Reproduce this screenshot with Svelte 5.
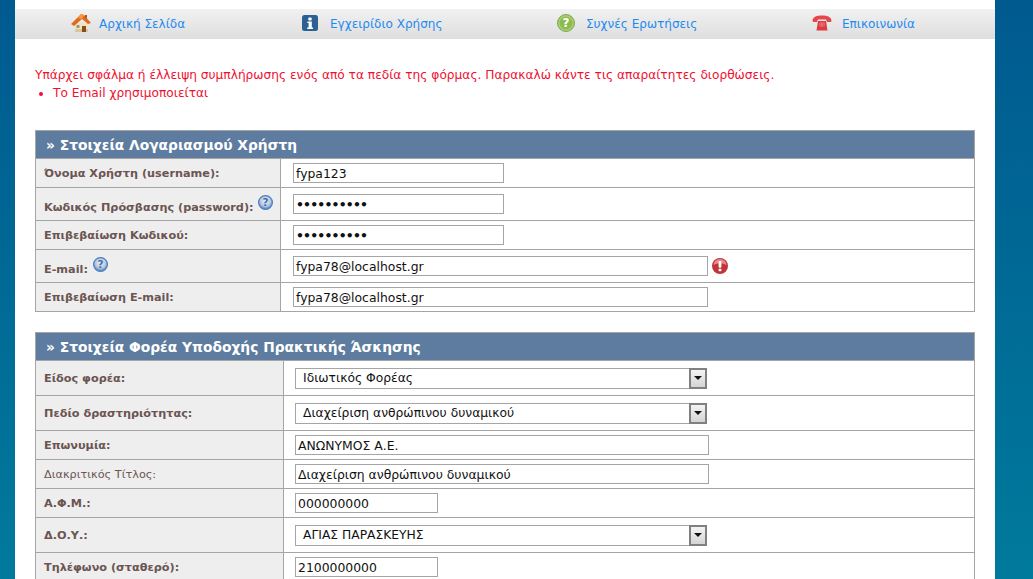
<script lang="ts">
	interface Row {
		label: string;
		h: number;
		kind: 'text' | 'password' | 'select';
		value: string;
		width: number;
		plain?: boolean;
		help?: boolean;
		error?: boolean;
	}

	const accountRows: Row[] = [
		{ label: 'Όνομα Χρήστη (username):', h: 29, kind: 'text', value: 'fypa123', width: 211 },
		{ label: 'Κωδικός Πρόσβασης (password):', h: 33, kind: 'password', value: 'fypa123456', width: 211, help: true },
		{ label: 'Επιβεβαίωση Κωδικού:', h: 29, kind: 'password', value: 'fypa123456', width: 211 },
		{ label: 'E-mail:', h: 33, kind: 'text', value: 'fypa78@localhost.gr', width: 415, help: true, error: true },
		{ label: 'Επιβεβαίωση E-mail:', h: 29, kind: 'text', value: 'fypa78@localhost.gr', width: 415 }
	];

	const hostRows: Row[] = [
		{ label: 'Είδος φορέα:', h: 35, kind: 'select', value: 'Ιδιωτικός Φορέας', width: 412 },
		{ label: 'Πεδίο δραστηριότητας:', h: 35, kind: 'select', value: 'Διαχείριση ανθρώπινου δυναμικού', width: 412 },
		{ label: 'Επωνυμία:', h: 29, kind: 'text', value: 'ΑΝΩΝΥΜΟΣ Α.Ε.', width: 414 },
		{ label: 'Διακριτικός Τίτλος:', h: 29, kind: 'text', value: 'Διαχείριση ανθρώπινου δυναμικού', width: 414, plain: true },
		{ label: 'Α.Φ.Μ.:', h: 29, kind: 'text', value: '000000000', width: 143 },
		{ label: 'Δ.Ο.Υ.:', h: 35, kind: 'select', value: 'ΑΓΙΑΣ ΠΑΡΑΣΚΕΥΗΣ', width: 412 },
		{ label: 'Τηλέφωνο (σταθερό):', h: 29, kind: 'text', value: '2100000000', width: 143 }
	];
</script>

{#snippet help()}
	<svg class="help" viewBox="0 0 16 16" width="15" height="15" aria-hidden="true">
		<defs>
			<radialGradient id="helpfill" cx="50%" cy="40%" r="60%">
				<stop offset="0" stop-color="#eef1f6" />
				<stop offset="0.6" stop-color="#b9c9de" />
				<stop offset="1" stop-color="#3f78bb" />
			</radialGradient>
		</defs>
		<circle cx="8" cy="8" r="7.4" fill="url(#helpfill)" stroke="#4a80c0" stroke-width="1.2" />
		<text x="8" y="12" text-anchor="middle" class="help-mark">?</text>
	</svg>
{/snippet}

{#snippet formTable(title: string, rows: Row[], labelWidth: number, cellPad: number)}
	<table class="form-table">
		<colgroup>
			<col style="width: {labelWidth}px" />
			<col />
		</colgroup>
		<thead>
			<tr><th colspan="2">» {title}</th></tr>
		</thead>
		<tbody>
			{#each rows as row}
				<tr style="height: {row.h}px">
					<td class="label" class:plain={row.plain}>
						{row.label}
						{#if row.help}{@render help()}{/if}
					</td>
					<td class="field" style="padding-left: {cellPad}px">
						<div class="field-line">
							{#if row.kind === 'select'}
								<div class="select-wrap" style="width: {row.width}px">
									<select>
										<option>{row.value}</option>
									</select>
									<span class="select-btn"><span class="arrow"></span></span>
								</div>
							{:else}
								<input type={row.kind} value={row.value} style="width: {row.width}px" />
							{/if}
							{#if row.error}
								<svg class="err" viewBox="0 0 16 16" width="16" height="16" aria-hidden="true">
									<circle cx="8" cy="8" r="8" fill="#c0343a" />
									<path d="M1.5 7a6.5 6 0 0 1 13 0a8 4 0 0 0-13 0z" fill="#e88a8a" />
									<rect x="6.6" y="3" width="2.8" height="6.8" rx="0.8" fill="#fff" />
									<rect x="6.6" y="10.8" width="2.8" height="2.4" rx="0.6" fill="#fff" />
								</svg>
							{/if}
						</div>
					</td>
				</tr>
			{/each}
		</tbody>
	</table>
{/snippet}

<div class="page">
	<nav class="topnav">
		<a class="nav-item home" href="#home">
			<svg viewBox="0 0 22 22" width="22" height="22" aria-hidden="true">
				<path d="M5 11h13v9H5z" fill="#f1e3bb" />
				<path d="M5 17h13v3H5z" fill="#d8c79b" />
				<path d="M12 14h4v6h-4z" fill="#8a4a20" />
				<path d="M6.5 13h3v3h-3z" fill="#9c9478" />
				<path d="M1 12 L11 2 L14 3 L21 11 L18 12 L12 7 L4 14z" fill="#e2691c" />
				<path d="M8 6 L11 2 L14 3 L12 7z" fill="#f59a45" />
				<path d="M15 3h2v4l-2-2z" fill="#a9542a" />
			</svg>
			<span>Αρχική Σελίδα</span>
		</a>
		<a class="nav-item manual" href="#manual">
			<svg viewBox="0 0 16 16" width="16" height="16" aria-hidden="true">
				<rect width="16" height="16" rx="2.5" fill="#2c6191" />
				<rect x="6.3" y="2.4" width="3.4" height="3" rx="1" fill="#fff" />
				<path d="M5.4 6.6h4.4v6h1.2v1.3H5.2v-1.3h1.4V8H5.4z" fill="#fff" />
			</svg>
			<span>Εγχειρίδιο Χρήσης</span>
		</a>
		<a class="nav-item faq" href="#faq">
			<svg viewBox="0 0 18 18" width="18" height="18" aria-hidden="true">
				<circle cx="9" cy="9" r="8.5" fill="#a7cf70" stroke="#7fa650" stroke-width="1" />
				<circle cx="9" cy="9" r="6.3" fill="#8dbb4e" />
				<text x="9" y="13.2" text-anchor="middle" class="faq-mark">?</text>
			</svg>
			<span>Συχνές Ερωτήσεις</span>
		</a>
		<a class="nav-item contact" href="#contact">
			<svg viewBox="0 0 20 16" width="20" height="16" aria-hidden="true">
				<path d="M0.5 5.5 C1 1.5 5 0.5 10 0.5 S19 1.5 19.5 5.5 L19 7 H15 L14 4.5 H6 L5 7 H1z" fill="#e4484c" />
				<path d="M4.5 15.5 L6 6 H14 L15.5 15.5z" fill="#dd3b40" />
				<path d="M7.5 7.5h5v4h-5z" fill="#f08c8c" />
				<path d="M8.4 7.5v4M10 7.5v4M11.6 7.5v4" stroke="#c93035" stroke-width="0.6" />
			</svg>
			<span>Επικοινωνία</span>
		</a>
	</nav>

	<div class="content">
		<div class="errors">
			<p>Υπάρχει σφάλμα ή έλλειψη συμπλήρωσης ενός από τα πεδία της φόρμας. Παρακαλώ κάντε τις απαραίτητες διορθώσεις.</p>
			<ul>
				<li>Το Email χρησιμοποιείται</li>
			</ul>
		</div>

		{@render formTable('Στοιχεία Λογαριασμού Χρήστη', accountRows, 245, 12)}
		{@render formTable('Στοιχεία Φορέα Υποδοχής Πρακτικής Άσκησης', hostRows, 248, 11)}
	</div>
</div>

<style>
	:global(html), :global(body) {
		height: 579px;
		overflow: hidden;
	}

	:global(body) {
		background: linear-gradient(180deg, #005a90 0%, #007a9c 100%);
		font-family: "DejaVu Sans", Verdana, sans-serif;
	}

	.page {
		width: 980px;
		margin-left: 15px;
		padding-top: 9px;
		background: #fff;
		min-height: 800px;
	}

	.topnav {
		display: flex;
		height: 30px;
		background: linear-gradient(180deg, #f1f1f1 0%, #dedede 100%);
	}

	.nav-item {
		display: flex;
		align-items: center;
		box-sizing: border-box;
		color: #1f8af0;
		font-size: 12.05px;
		text-decoration: none;
	}

	.nav-item svg {
		flex: none;
		margin-bottom: 2px;
	}

	.home { width: 287px; padding-left: 55px; gap: 7px; }
	.home svg { margin-bottom: 3px; }
	.manual { width: 255px; gap: 12px; }
	.faq { width: 255px; gap: 11px; }
	.contact { gap: 10px; }

	.content {
		padding: 0 20px;
	}

	.errors {
		color: #f01030;
		font-size: 12.2px;
		line-height: 18px;
		padding-top: 27px;
		margin-bottom: 18px;
		height: 46px;
	}

	.errors p {
		margin: 0;
	}

	.errors ul {
		margin: 0;
		padding: 0 0 0 18px;
	}

	.form-table {
		width: 940px;
		border-collapse: collapse;
		table-layout: fixed;
		margin-bottom: 20px;
		font-size: 11.25px;
	}

	.form-table th {
		height: 27px;
		padding: 0 0 0 10px;
		background: #5d7ca0;
		border: 1px solid #a5a5a5;
		color: #fff;
		font-size: 13.8px;
		font-weight: bold;
		text-align: left;
	}

	.form-table td {
		border: 1px solid #a5a5a5;
		padding: 0;
	}

	.label {
		background: #eeeeee;
		color: #6b5552;
		font-weight: bold;
		padding-left: 8px !important;
		white-space: nowrap;
	}

	.label.plain {
		font-weight: normal;
	}

	.help {
		vertical-align: 1px;
		margin-left: 1px;
	}

	.help-mark {
		fill: #3f6fb0;
		font-size: 11px;
		font-weight: bold;
		font-family: "DejaVu Sans", sans-serif;
	}

	.faq-mark {
		fill: #fff;
		font-size: 12px;
		font-weight: bold;
		font-family: "DejaVu Sans", sans-serif;
	}

	.field {
		background: #fff;
	}

	.field-line {
		display: flex;
		align-items: center;
		gap: 4px;
	}

	input {
		box-sizing: border-box;
		height: 20px;
		border: 1px solid #a5a5a5;
		padding: 0 2px;
		margin: 0;
		font-family: "DejaVu Sans", Verdana, sans-serif;
		font-size: 12.4px;
		color: #111;
		background: #fff;
		outline: none;
	}

	input[type='password'] {
		font-weight: bold;
		letter-spacing: -0.8px;
	}

	.select-wrap {
		position: relative;
		height: 21px;
	}

	select {
		box-sizing: border-box;
		width: 100%;
		height: 100%;
		appearance: none;
		border: 1px solid #a5a5a5;
		border-radius: 0;
		padding: 0 0 0 7px;
		margin: 0;
		background: #fff;
		font-family: "DejaVu Sans", Verdana, sans-serif;
		font-size: 12.3px;
		color: #111;
	}

	.select-btn {
		position: absolute;
		top: 0;
		right: 0;
		width: 18px;
		height: 21px;
		box-sizing: border-box;
		border: 2px solid #808080;
		background: linear-gradient(180deg, #f4f4f4 0%, #d4d4d4 100%);
		display: flex;
		align-items: center;
		justify-content: center;
		pointer-events: none;
	}

	.arrow {
		width: 0;
		height: 0;
		border-left: 4px solid transparent;
		border-right: 4px solid transparent;
		border-top: 4px solid #111;
	}
</style>
